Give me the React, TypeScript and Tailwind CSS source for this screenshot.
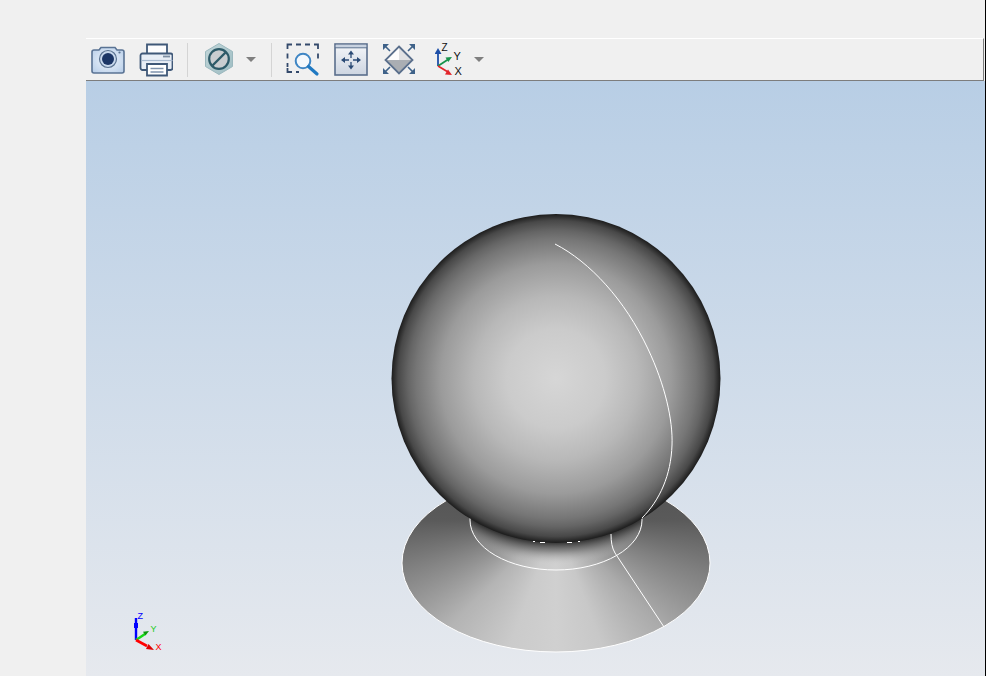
import type { ReactNode } from "react";

const LABEL_FONT = "font-['Liberation_Sans',sans-serif]";

function ToolBtn({ w, children }: { w: number; children: ReactNode }) {
  return (
    <svg width={w} height={34} viewBox={`0 0 ${w} 34`} className="block shrink-0">
      {children}
    </svg>
  );
}

function Sep() {
  return <div className="h-[34px] w-px bg-[#d4d4d4]" />;
}

function Caret() {
  return (
    <svg width={10} height={5} viewBox="0 0 10 5" className="block shrink-0">
      <path d="M0 0h10L5 5z" fill="#7f7f7f" />
    </svg>
  );
}

function CameraIcon() {
  return (
    <ToolBtn w={34}>
      <defs>
        <radialGradient id="cam" cx="0.5" cy="0.5" r="0.7">
          <stop offset="0" stopColor="#f1f6fc" />
          <stop offset="1" stopColor="#b5cce8" />
        </radialGradient>
      </defs>
      <path
        d="M3 7h5l2-2.500h14l2 2.500h5a2 2 0 0 1 2 2v19a2 2 0 0 1-2 2H3a2 2 0 0 1-2-2V9a2 2 0 0 1 2-2z"
        fill="url(#cam)"
        stroke="#5a7394"
        strokeWidth="1.600"
      />
      <circle cx="17" cy="16" r="8.500" fill="#c8d8ec" stroke="#5b7391" strokeWidth="1.200" />
      <circle cx="17" cy="16" r="6" fill="#1c3666" />
      <circle cx="28.500" cy="9.500" r="1.100" fill="#5b7391" />
    </ToolBtn>
  );
}

function PrinterIcon() {
  return (
    <ToolBtn w={34}>
      <path d="M8 12V1.500h20V12" fill="#fdfdfe" stroke="#3f5878" strokeWidth="1.800" />
      <path
        d="M3.500 10.500h28a2 2 0 0 1 2 2V25a2 2 0 0 1-2 2h-28a2 2 0 0 1-2-2V12.500a2 2 0 0 1 2-2z"
        fill="#e8eef6"
        stroke="#3f5878"
        strokeWidth="1.800"
      />
      <path d="M2.500 17.500h31" stroke="#a8bad0" strokeWidth="1.200" />
      <path d="M24 13.500h7" stroke="#7d8ea4" strokeWidth="1.800" />
      <path d="M8 21h20v11.500H8z" fill="#fff" stroke="#3f5878" strokeWidth="1.800" />
      <path d="M11.500 25.500h13M11.500 29h13" stroke="#7f93ad" strokeWidth="1.400" />
    </ToolBtn>
  );
}

function HexIcon() {
  return (
    <ToolBtn w={30}>
      <defs>
        <linearGradient id="hex" x1="0" y1="0" x2="1" y2="1">
          <stop offset="0" stopColor="#c3d7da" />
          <stop offset="1" stopColor="#9dbcc2" />
        </linearGradient>
      </defs>
      <path d="M15 .5 28.500 8.500v15L15 31.500 1.500 23.500v-15z" fill="url(#hex)" stroke="#9bb8be" strokeWidth="1" />
      <circle cx="15" cy="16" r="9.800" fill="#c9cdd0" stroke="#2d5a68" strokeWidth="2.200" />
      <path d="M8.500 22.500 21.500 9.500" stroke="#2d5a68" strokeWidth="2.400" />
    </ToolBtn>
  );
}

function ZoomWindowIcon() {
  return (
    <ToolBtn w={34}>
      <path
        d="M1.500 6V1.500H6M10 1.500h5M19 1.500h5M28 1.500h4V6M1.500 10.500v5M1.500 20v4M1.500 25v4H6M10 29h3M32 10.500v5"
        fill="none"
        stroke="#33496b"
        strokeWidth="1.800"
      />
      <circle cx="17" cy="18" r="7.300" fill="#f4f8fc" stroke="#3f86c4" strokeWidth="2" />
      <path d="m22.500 23.500 8.500 7.500" stroke="#1f79c2" strokeWidth="3.200" strokeLinecap="round" />
    </ToolBtn>
  );
}

function PanIcon() {
  return (
    <ToolBtn w={34}>
      <defs>
        <linearGradient id="pan" x1="0" y1="0" x2="0" y2="1">
          <stop offset="0" stopColor="#f4f6f9" />
          <stop offset="1" stopColor="#cdd5e1" />
        </linearGradient>
      </defs>
      <rect x="1" y="1" width="32" height="31" fill="url(#pan)" stroke="#5b6f8d" strokeWidth="1.600" />
      <rect x="1.800" y="1.800" width="30.400" height="2.800" fill="#c8d2e0" />
      <path d="M1 4.800h32" stroke="#5b6f8d" strokeWidth="1" />
      <path d="M17 11v4M17 19v4M11 17h4M19 17h4" stroke="#2a4a75" strokeWidth="1.300" />
      <path d="m17 7.500 3 4h-6zM17 26.500l3-4h-6zM7 17l4-3v6zM27 17l-4-3v6z" fill="#2a4a75" />
    </ToolBtn>
  );
}

function FitIcon() {
  return (
    <ToolBtn w={34}>
      <path d="M17 4 17 17H4z" fill="#fdfdfd" />
      <path d="M17 4 30 17H17z" fill="#e0e1e3" />
      <path d="M17 30 30 17H4z" fill="#aaaeb3" />
      <path d="M17 3.500 30.500 17 17 30.500 3.500 17z" fill="none" stroke="#5a6f8c" strokeWidth="1.800" />
      <path d="M1 1h6L1 7zM33 1h-6l6 6zM1 31h6l-6-6zM33 31h-6l6-6z" fill="#3f6289" />
      <path d="m3 3 5 5M31 3l-5 5M3 29l5-5M31 29l-5-5" stroke="#3f6289" strokeWidth="1.600" />
    </ToolBtn>
  );
}

function AxesIcon() {
  return (
    <svg width={30} height={34} viewBox="0 0 30 34" className="block shrink-0">
      <path d="M3 23V9" stroke="#1d4fa8" strokeWidth="1.800" />
      <path d="M3 5 6.500 11h-7z" fill="#1d4fa8" />
      <path d="m3 23 10-6.500" stroke="#17934a" strokeWidth="1.800" />
      <path d="m17 14-6.500.500 2.800 4.500z" fill="#17934a" />
      <path d="m3 23 10 6" stroke="#e2252b" strokeWidth="1.800" />
      <path d="m17 32-7-.500 3-5z" fill="#e2252b" />
      <text x="6.500" y="8" fontSize="10" fill="#111" className={LABEL_FONT}>Z</text>
      <text x="18.500" y="16.500" fontSize="11" fill="#111" className={LABEL_FONT}>Y</text>
      <text x="19.500" y="31.500" fontSize="11" fill="#111" className={LABEL_FONT}>X</text>
    </svg>
  );
}

function Model() {
  const rim = "#ffffff";
  return (
    <svg width={899} height={595} viewBox="86 81 899 595" className="block">
      <defs>
        <radialGradient id="sphere" gradientUnits="userSpaceOnUse" cx="556" cy="378.500" r="164.500">
          <stop offset="0" stopColor="#d6d6d6" />
          <stop offset="0.3" stopColor="#cbcbcb" />
          <stop offset="0.5" stopColor="#b8b8b8" />
          <stop offset="0.7" stopColor="#9b9b9b" />
          <stop offset="0.85" stopColor="#767676" />
          <stop offset="0.9" stopColor="#656565" />
          <stop offset="0.96" stopColor="#484848" />
          <stop offset="1" stopColor="#1c1c1c" />
        </radialGradient>
        <radialGradient id="shade" gradientUnits="userSpaceOnUse" cx="556" cy="378.500" r="186">
          <stop offset="0.87" stopColor="#1a1a1a" stopOpacity="1" />
          <stop offset="0.93" stopColor="#707070" stopOpacity="0.7" />
          <stop offset="1" stopColor="#c8c8c8" stopOpacity="0" />
        </radialGradient>
        <clipPath id="ring">
          <ellipse cx="556" cy="520" rx="86" ry="50" />
        </clipPath>
      </defs>
      {/* cone shading is angular around the apex, so a conic gradient fits it */}
      <foreignObject x="402" y="474" width="308" height="178">
        <div className="h-[178px] w-[308px] rounded-[50%] bg-[conic-gradient(from_0deg_at_50%_26%,#3c3c3c_0deg,#5a5a5a_90deg,#808080_110deg,#aaaaaa_135deg,#c8c8c8_160deg,#d0d0d0_180deg,#cbcbcb_200deg,#b4b4b4_225deg,#848484_250deg,#5a5a5a_270deg,#3c3c3c_360deg)]" />
      </foreignObject>
      <ellipse cx="556" cy="563" rx="154" ry="89" fill="none" stroke={rim} strokeWidth="1" />
      <circle cx="556" cy="378.500" r="186" fill="url(#shade)" clipPath="url(#ring)" />
      <ellipse cx="556" cy="520" rx="86" ry="50" fill="none" stroke={rim} strokeWidth="1" />
      <path d="M611 534c0 8 1 14 4 19l49 74" fill="none" stroke={rim} strokeWidth="1" />
      <circle cx="556" cy="378.500" r="164.500" fill="url(#sphere)" />
      <path
        d="M555 244C590 262 625 300 648 349C665 385 673 420 672 445C671 475 660 500 642 518"
        fill="none"
        stroke={rim}
        strokeWidth="1"
      />
      <path d="M533 541.500h2M540 542.500h5M567 542.500h5M578 541.500h2" stroke={rim} strokeWidth="1" />
      <path d="M136 640V618" stroke="#0000ff" strokeWidth="2.400" />
      <path d="M136 623v5" stroke="#0000ff" strokeWidth="4" />
      <path d="m136 640 9-6" stroke="#16d916" strokeWidth="2.400" />
      <path d="m149 631-6 .800 2.500 3.700z" fill="#0a9a0a" />
      <path d="m136 640 11 6" stroke="#ff0000" strokeWidth="2.600" />
      <path d="m154 650-8-1 2.500-5z" fill="#e00000" />
      <text x="137.500" y="619" fontSize="9" fill="#0000ff" className={LABEL_FONT}>Z</text>
      <text x="150.500" y="632" fontSize="9" fill="#22cc22" className={LABEL_FONT}>Y</text>
      <text x="155.500" y="650" fontSize="9" fill="#ff0000" className={LABEL_FONT}>X</text>
    </svg>
  );
}

export default function App() {
  return (
    <div className="flex h-[676px] w-[987px] overflow-hidden bg-[#f0f0f0]">
      <div className="h-full w-[985px] shrink-0 pl-[86px] pt-[38px]">
        <div className="flex h-[43px] w-[898px] items-center border-b border-r border-t border-b-[#7d7d7d] border-r-[#7d7d7d] border-t-white pl-[5px]">
          <CameraIcon />
          <div className="ml-[14px]">
            <PrinterIcon />
          </div>
          <div className="ml-[14px]">
            <Sep />
          </div>
          <div className="ml-[16px]">
            <HexIcon />
          </div>
          <div className="ml-[12px]">
            <Caret />
          </div>
          <div className="ml-[15px]">
            <Sep />
          </div>
          <div className="ml-[14px] flex items-center gap-[14px]">
            <ZoomWindowIcon />
            <PanIcon />
            <FitIcon />
          </div>
          <div className="ml-[19px]">
            <AxesIcon />
          </div>
          <div className="ml-[9px]">
            <Caret />
          </div>
        </div>
        <div className="h-[595px] w-[899px] bg-gradient-to-b from-[#b8cee5] to-[#e6e9ee]">
          <Model />
        </div>
      </div>
      <div className="h-full w-px bg-black" />
      <div className="h-full w-px bg-white" />
    </div>
  );
}
